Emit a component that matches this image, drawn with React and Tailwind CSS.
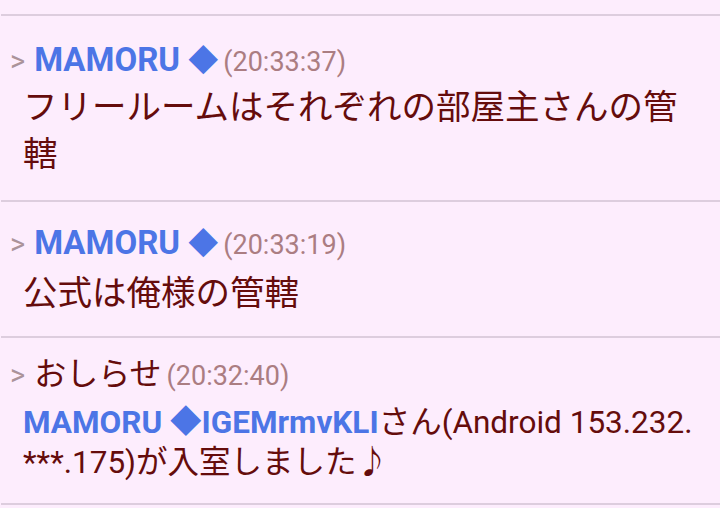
import React from 'react';

const Header = ({ children, time }) => (
  <div className="flex items-baseline whitespace-nowrap">
    <span className="pl-[9px] pr-[9px] text-[29px] leading-[40px] text-[#ab939a]">&gt;</span>
    {children}
    <span className="ml-[5px] text-[27px] leading-[40px] text-[#ab7d82]">{time}</span>
  </div>
);

const Name = ({ name }) => (
  <span className="text-[33px] leading-[40px] font-bold text-[#4c75e6]">
    {name} <span className="text-[30px]">◆</span>
  </span>
);

const App = () => {
  return (
    <div className="h-[508px] w-[720px] overflow-hidden bg-[#fdedfd] font-[Roboto,'Noto_Sans_CJK_JP',sans-serif] text-[#650c0c]">
      <div className="ml-px h-[16px] border-b-2 border-[#ddcdde]" />

      {/* first message */}
      <div className="ml-px border-b-2 border-[#ddcdde] pt-[24px] pb-[22px]">
        <Header time="(20:33:37)">
          <Name name="MAMORU" />
        </Header>
        <p className="pl-[22px] pr-[16px] pt-[2px] text-[34.5px] leading-[47px]">
          フリールームはそれぞれの部屋主さんの管轄
        </p>
      </div>

      {/* second message */}
      <div className="ml-px border-b-2 border-[#ddcdde] pt-[21px] pb-[19px]">
        <Header time="(20:33:19)">
          <Name name="MAMORU" />
        </Header>
        <p className="pl-[22px] pr-[16px] pt-[4px] text-[34.5px] leading-[48px]">公式は俺様の管轄</p>
      </div>

      {/* system notice */}
      <div className="ml-px border-b-2 border-[#ddcdde] pt-[16px] pb-[20px]">
        <Header time="(20:32:40)">
          <span className="text-[32px] leading-[40px]">おしらせ</span>
        </Header>
        <p className="pl-[22px] pr-[16px] pt-[7px] text-[31.5px] leading-[40px]">
          <span className="font-bold text-[#4c75e6]">MAMORU ◆IGEMrmvKLI</span>
          さん(Android 153.232.<wbr />***.175)が入室しました♪
        </p>
      </div>
    </div>
  );
};

export default App;
